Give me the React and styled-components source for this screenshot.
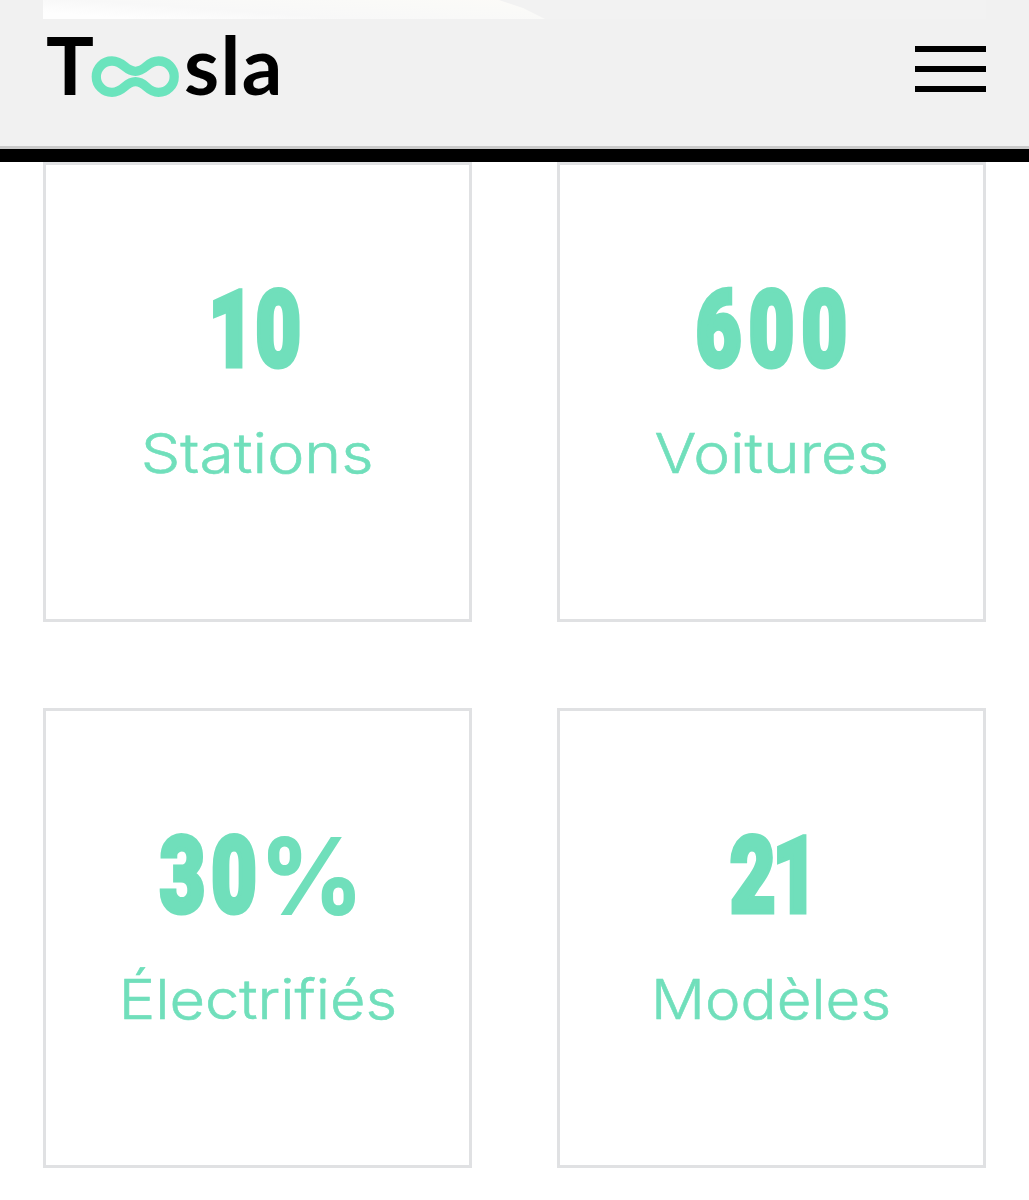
import React from 'react';
import styled, { createGlobalStyle } from 'styled-components';

const GlobalStyle = createGlobalStyle`
  * {
    box-sizing: border-box;
  }

  body {
    margin: 0;
    background: #fff;
  }
`;

const Header = styled.header`
  height: 149px;
  background: #f1f1f1;
  border-bottom: 3px solid #cacaca;
`;

const Banner = styled.div`
  height: 19px;
  margin: 0 43px;
  background: #f2f2f2;
`;

const BannerShape = styled.div`
  width: 502px;
  height: 100%;
  background: linear-gradient(4deg, #fefefe 12%, #f8f8f8 40%, #fafaf8 75%, #fcfbf8);
  clip-path: polygon(0 0, 456px 0, 480px 8px, 502px 100%, 0 100%);
`;

const Bar = styled.div`
  display: flex;
  justify-content: space-between;
  padding: 12px 43px 0 46px;
`;

const Logo = styled.a`
  display: flex;
  height: 70px;
  color: #000;
  font-family: Lato, sans-serif;
  font-size: 80px;
  font-weight: 700;
  line-height: 67px;
`;

const LogoLoop = styled.svg`
  width: 90px;
  height: 46px;
  margin: 22px 0 0 -4px;
`;

const LogoEnd = styled.span`
  margin-left: 4px;
  letter-spacing: 1.4px;
`;

const MenuButton = styled.button`
  display: flex;
  flex-direction: column;
  gap: 14px;
  width: 71px;
  height: 46px;
  margin-top: 15px;
  padding: 0;
  border: 0;
  background: none;
`;

const MenuLine = styled.span`
  flex: none;
  width: 100%;
  height: 6px;
  background: #000;
`;

const Divider = styled.div`
  height: 13px;
  background: #000;
`;

const Stats = styled.main`
  display: grid;
  grid-template-columns: 1fr 1fr;
  gap: 86px 85px;
  padding: 0 43px 32px;
`;

const Card = styled.section`
  display: flex;
  flex-direction: column;
  align-items: center;
  height: 460px;
  padding-top: 105px;
  border: 3px solid #e0e1e3;
  color: #70dfbb;
  white-space: nowrap;
`;

const Value = styled.strong`
  display: flex;
  margin-left: ${props => props.$shift}px;
  font-family: Roboto, sans-serif;
  font-size: 106px;
  font-weight: 900;
  line-height: 120px;
  letter-spacing: ${props => props.$spacing}px;
  transform: scaleX(0.74);
  -webkit-text-stroke: 5px #70dfbb;
`;

const Unit = styled.span`
  margin-left: -4px;
  font-family: Inter, sans-serif;
  font-size: 107px;
  font-weight: 800;
  letter-spacing: 0;
  transform: scaleX(1.27);
  transform-origin: left;
  -webkit-text-stroke: 0;
`;

const Label = styled.span`
  margin-top: 30px;
  font-family: Inter, sans-serif;
  font-size: 55px;
  font-weight: 300;
  line-height: 66px;
  transform: scaleX(${props => props.$stretch});
  -webkit-text-stroke: 0.6px #70dfbb;
`;

const stats = [
  { value: '10', label: 'Stations', spacing: 2, shift: -5, stretch: 1.14 },
  { value: '600', label: 'Voitures', spacing: 10, shift: 8, stretch: 1.13 },
  { value: '30', unit: '%', label: 'Électrifiés', spacing: 8, shift: -14, stretch: 1.115 },
  { value: '21', label: 'Modèles', spacing: -4, shift: 2, stretch: 1.09 },
];

const App = () => (
  <>
    <GlobalStyle />
    <Header>
      <Banner>
        <BannerShape />
      </Banner>
      <Bar>
        <Logo aria-label="Toosla">
          <span>T</span>
          <LogoLoop viewBox="0 0 90 46">
            <path
              d="M22 8C34 8 35 18.3 45.500 18.300S57 8 68.500 8A15.700 15.700 0 0 1 68.500 39.400C57 39.400 56 28.700 45.500 28.700S34 39.400 22 39.400A15.700 15.700 0 0 1 22 8Z"
              fill="none"
              stroke="#6be4bd"
              strokeWidth="9.3"
            />
          </LogoLoop>
          <LogoEnd>sla</LogoEnd>
        </Logo>
        <MenuButton aria-label="Menu">
          <MenuLine />
          <MenuLine />
          <MenuLine />
        </MenuButton>
      </Bar>
    </Header>
    <Divider />
    <Stats>
      {stats.map(item => (
        <Card key={item.label}>
          <Value $spacing={item.spacing} $shift={item.shift}>
            {item.value}
            {item.unit && <Unit>{item.unit}</Unit>}
          </Value>
          <Label $stretch={item.stretch}>{item.label}</Label>
        </Card>
      ))}
    </Stats>
  </>
);

export default App;
